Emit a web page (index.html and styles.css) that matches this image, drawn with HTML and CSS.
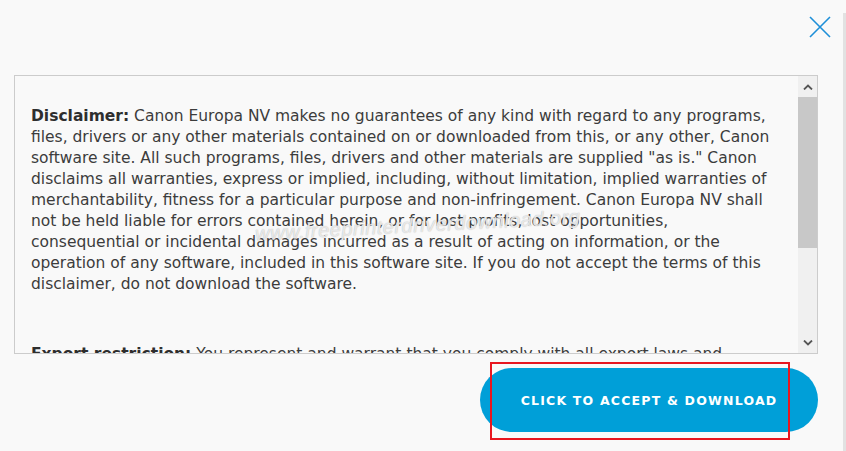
FILE: index.html
```html
<!DOCTYPE html>
<html>
<head>
  <meta name="viewport" content="width=device-width, initial-scale=1.0">
  <meta charset="UTF-8">
  <title>Canon - Download</title>
  <link rel="stylesheet" href="styles.css">
</head>
<body>
  <div class="modal">
    <div class="topo">
      <button class="fechar" type="button" aria-label="Fechar">
        <svg width="22" height="22" viewBox="0 0 22 22">
          <path d="M1 1 L21 21 M21 1 L1 21" stroke="#1e8fd8" stroke-width="1.6" fill="none"/>
        </svg>
      </button>
    </div>

    <div class="caixa">
      <div class="texto">
        <p><b>Disclaimer:</b> Canon Europa NV makes no guarantees of any kind with regard to any programs, files, drivers or any other materials contained on or downloaded from this, or any other, Canon software site. All such programs, files, drivers and other materials are supplied "as is." Canon disclaims all warranties, express or implied, including, without limitation, implied warranties of merchantability, fitness for a particular purpose and non-infringement. Canon Europa NV shall not be held liable for errors contained herein, or for lost profits, lost opportunities, consequential or incidental damages incurred as a result of acting on information, or the operation of any software, included in this software site. If you do not accept the terms of this disclaimer, do not download the software.</p>
        <p><b>Export restriction:</b> You represent and warrant that you comply with all export laws and regulations.</p>
      </div>
      <div class="rolagem">
        <div class="seta">
          <svg width="10" height="6" viewBox="0 0 10 6"><path d="M1 5.5 L5 1.5 L9 5.5" stroke="#555" stroke-width="1.8" fill="none"/></svg>
        </div>
        <div class="trilho"><div class="barra"></div></div>
        <div class="seta">
          <svg width="10" height="6" viewBox="0 0 10 6"><path d="M1 0.5 L5 4.5 L9 0.5" stroke="#555" stroke-width="1.8" fill="none"/></svg>
        </div>
      </div>
      <span class="marca">www.freeprinterdriverdownload.org</span>
    </div>

    <div class="rodape">
      <button class="aceitar" type="button">CLICK TO ACCEPT &amp; DOWNLOAD</button>
      <div class="destaque"></div>
    </div>
  </div>
  <div class="barra-pagina"></div>
</body>
</html>
```

FILE: styles.css
```css
body {
  margin: 0;
  height: 451px;
  overflow: hidden;
  display: flex;
  background-color: #f9f9f9;
  font-family: "DejaVu Sans", sans-serif;
  color: #3c3c3c;
}

.modal {
  flex: 1;
  display: flex;
  flex-direction: column;
}

.topo {
  height: 75px;
  display: flex;
  justify-content: flex-end;
  align-items: flex-start;
  padding-right: 12px;
  box-sizing: border-box;
}

.fechar {
  margin-top: 16px;
  padding: 0;
  border: none;
  background: none;
  cursor: pointer;
  width: 22px;
  height: 22px;
}

.caixa {
  position: relative;
  height: 279px;
  margin: 0 25px 0 14px;
  border: 1px solid #cccccc;
  box-sizing: border-box;
  display: flex;
  overflow: hidden;
}

.texto {
  flex: 1;
  padding: 30px 22px 0 16px;
  font-size: 15.5px;
  line-height: 21px;
  overflow: hidden;
}

.texto p {
  margin: 0 0 49px 0;
}

.texto b {
  color: #2e2e2e;
}

.rolagem {
  width: 19px;
  display: flex;
  flex-direction: column;
  background-color: #f0f0f0;
}

.seta {
  height: 21px;
  display: flex;
  align-items: center;
  justify-content: center;
}

.trilho {
  flex: 1;
}

.barra {
  height: 151px;
  background-color: #c8c8c8;
}

.marca {
  position: absolute;
  left: 240px;
  top: 138px;
  font-family: "Liberation Sans", sans-serif;
  font-size: 20px;
  font-style: italic;
  letter-spacing: 0.5px;
  color: rgba(255, 255, 255, 0.7);
  text-shadow: 0 0 1px #aaa;
  transform: rotate(-3deg);
  pointer-events: none;
}

.rodape {
  position: relative;
  display: flex;
  justify-content: flex-end;
  padding: 14px 25px 0 0;
}

.aceitar {
  width: 338px;
  height: 64px;
  border: none;
  border-radius: 32px;
  background-color: #009fd8;
  color: white;
  font-family: "DejaVu Sans", sans-serif;
  font-weight: 700;
  font-size: 12.5px;
  letter-spacing: 1.2px;
  cursor: pointer;
}

.destaque {
  position: absolute;
  left: 490px;
  top: 8px;
  width: 300px;
  height: 78px;
  border: 2px solid #e8161f;
  box-sizing: border-box;
  pointer-events: none;
}

.barra-pagina {
  width: 3px;
  margin-top: 13px;
  background-color: #e2e2e2;
}
```
